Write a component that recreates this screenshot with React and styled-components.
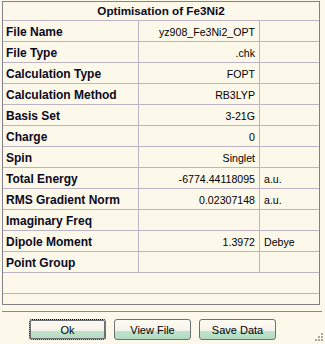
import React from "react";
import styled, { createGlobalStyle } from "styled-components";

const Global = createGlobalStyle`
  html, body { margin: 0; padding: 0; background: #fcf8ea; }
  body { font-family: "Liberation Sans", Arial, sans-serif; font-size: 11px; color: #000; }
`;

const Window = styled.div`
  position: relative;
  width: 325px;
  height: 344px;
  padding: 1px 0 0 2px;
  box-sizing: border-box;
  background: #fcf8ea;
  display: flex;
  flex-direction: column;
`;

const Box = styled.div`
  width: 318px;
  height: 304px;
  box-sizing: border-box;
  border: 1px solid #82808a;
  display: flex;
  flex-direction: column;
`;

const Header = styled.div`
  height: 19px;
  line-height: 18px;
  border-bottom: 1px solid #bdb3c3;
  text-align: center;
  font-weight: bold;
  font-size: 11.7px;
  color: #0a0a1e;
  box-sizing: border-box;
`;

const Row = styled.div`
  display: grid;
  grid-template-columns: 136px 121px 59px;
  height: 21px;
  border-bottom: 1px solid #bdb3c3;
  box-sizing: border-box;
`;

const Cell = styled.div`
  line-height: 20px;
  padding-top: 1px;
  box-sizing: border-box;
  white-space: nowrap;
  overflow: hidden;
  border-right: ${(p) => (p.$last ? "none" : "1px solid #bdb3c3")};
  text-align: ${(p) => p.$align || "left"};
  padding-left: ${(p) => (p.$align === "right" ? "0" : p.$pl || "3px")};
  padding-right: ${(p) => (p.$align === "right" ? "4px" : "0")};
  font-weight: ${(p) => (p.$bold ? "bold" : "normal")};
  font-size: ${(p) => (p.$bold ? "12px" : "10.6px")};
  color: ${(p) => (p.$bold ? "#0a0a1e" : "#000")};
`;

const EmptyRow = styled.div`
  height: 21px;
  border-bottom: 1px solid #bdb3c3;
  box-sizing: border-box;
`;

const Separator = styled.div`
  margin-top: 6px;
  width: 320px;
  height: 1px;
  background: #8a8890;
`;

const ButtonBar = styled.div`
  display: flex;
  gap: 8px;
  margin-top: 7px;
  padding-left: 27px;
`;

const Button = styled.button`
  width: 77px;
  height: 21px;
  padding: 0;
  box-sizing: border-box;
  font-family: "Liberation Sans", Arial, sans-serif;
  font-size: 11px;
  color: #000;
  border-radius: 3px;
  border: ${(p) => (p.$focused ? "1px dotted #000" : "1px solid #6e6e76")};
  box-shadow: ${(p) => (p.$focused ? "inset 0 0 0 1px #6e6e76" : "none")};
  background: linear-gradient(
    to bottom,
    #fdfbf2 0%,
    #f6f4ea 55%,
    #c0e2cc 58%,
    #b3dbc2 100%
  );
  line-height: 18px;
`;

const Grip = styled.svg`
  position: absolute;
  right: 2px;
  bottom: 3px;
`;

const rows = [
  ["File Name", "yz908_Fe3Ni2_OPT", ""],
  ["File Type", ".chk", ""],
  ["Calculation Type", "FOPT", ""],
  ["Calculation Method", "RB3LYP", ""],
  ["Basis Set", "3-21G", ""],
  ["Charge", "0", ""],
  ["Spin", "Singlet", ""],
  ["Total Energy", "-6774.44118095", "a.u."],
  ["RMS Gradient Norm", "0.02307148", "a.u."],
  ["Imaginary Freq", "", ""],
  ["Dipole Moment", "1.3972", "Debye"],
  ["Point Group", "", ""],
];

export default function App() {
  return (
    <>
      <Global />
      <Window>
        <Box>
          <Header>Optimisation of Fe3Ni2</Header>
          {rows.map(([label, value, unit]) => (
            <Row key={label}>
              <Cell $bold>{label}</Cell>
              <Cell $align="right">{value}</Cell>
              <Cell $last $pl="4px">{unit}</Cell>
            </Row>
          ))}
          <EmptyRow />
        </Box>
        <Separator />
        <ButtonBar>
          <Button $focused>Ok</Button>
          <Button>View File</Button>
          <Button>Save Data</Button>
        </ButtonBar>
        <Grip width="8" height="8" viewBox="0 0 8 8">
          <g fill="#a8a4a0">
            <rect x="6" y="0" width="2" height="2" />
            <rect x="3" y="3" width="2" height="2" />
            <rect x="6" y="3" width="2" height="2" />
            <rect x="0" y="6" width="2" height="2" />
            <rect x="3" y="6" width="2" height="2" />
            <rect x="6" y="6" width="2" height="2" />
          </g>
        </Grip>
      </Window>
    </>
  );
}
